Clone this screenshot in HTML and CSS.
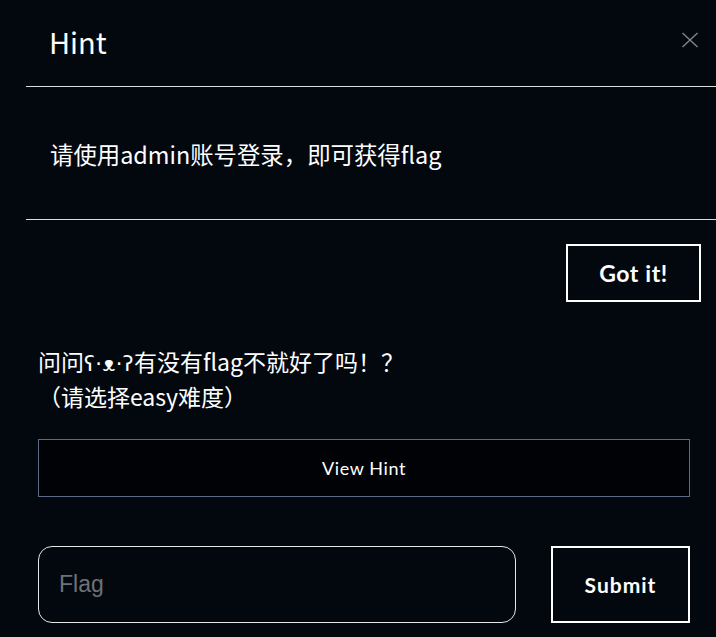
FILE: index.html
```html
<!DOCTYPE html>
<html lang="zh">
<head>
<meta charset="utf-8">
<title>Hint</title>
<link rel="stylesheet" href="styles.css">
</head>
<body>
<div class="modal">
  <div class="modal-header">
    <h5 class="modal-title">Hint</h5>
    <button class="close" aria-label="Close">
      <svg width="18" height="16" viewBox="0 0 18 16"><path d="M1.5 1 L16.5 15 M16.5 1 L1.5 15" stroke="#80858c" stroke-width="1.4" fill="none"/></svg>
    </button>
  </div>
  <div class="modal-body">请使用admin账号登录，即可获得flag</div>
  <div class="modal-footer">
    <button class="btn-outline">Got it!</button>
  </div>
</div>
<div class="challenge">
  <p class="desc">问问<span class="kaomoji">ʕ·ᴥ·ʔ</span>有没有flag不就好了吗！？<br>（请选择easy难度）</p>
  <button class="btn-hint">View Hint</button>
  <div class="submit-row">
    <input class="flag-input" type="text" placeholder="Flag">
    <button class="btn-submit">Submit</button>
  </div>
</div>
</body>
</html>
```

FILE: styles.css
```css
html, body {
  margin: 0;
  padding: 0;
  background: #03080f;
  color: #ffffff;
  font-family: "Lato", "Noto Sans CJK SC", sans-serif;
}

.modal {
  margin-left: 26px;
  width: 690px;
}

.modal-header {
  display: flex;
  align-items: center;
  justify-content: space-between;
  height: 87px;
  padding: 0 17px 0 24px;
  box-sizing: border-box;
  border-bottom: 1px solid #dcdcdc;
}

.modal-title {
  margin: -4px 0 0 -1px;
  font-family: "Noto Sans CJK SC", "Lato", sans-serif;
  font-size: 29px;
  font-weight: 400;
  line-height: 1;
}

.close {
  background: none;
  border: 0;
  padding: 0;
  margin-top: -6px;
  display: flex;
  cursor: pointer;
}

.modal-body {
  padding: 52px 24px 50px 24px;
  font-family: "Noto Sans CJK SC", sans-serif;
  font-size: 23.4px;
  line-height: 30px;
  height: 30px;
  border-bottom: 1px solid #dcdcdc;
  white-space: nowrap;
}

.modal-footer {
  display: flex;
  justify-content: flex-end;
  padding: 24px 15px 24px 24px;
}

.btn-outline {
  width: 135px;
  height: 58px;
  background: transparent;
  color: #fff;
  border: 2px solid #fff;
  font-family: "Lato", sans-serif;
  font-weight: 700;
  font-size: 23px;
  letter-spacing: 0.6px;
  cursor: pointer;
}

.challenge {
  padding: 0 26px 0 38px;
}

.desc {
  margin: 18px 0 25px 0;
  font-family: "Noto Sans CJK SC", sans-serif;
  font-size: 23px;
  line-height: 35px;
  height: 70px;
}

.kaomoji {
  font-family: "DejaVu Sans", sans-serif;
  font-size: 21px;
  line-height: 1;
  letter-spacing: 0.5px;
}

.btn-hint {
  display: block;
  width: 100%;
  height: 58px;
  background: #000206;
  color: #fff;
  border: 1px solid #5d6a85;
  font-family: "Lato", sans-serif;
  font-size: 18px;
  letter-spacing: 0.6px;
  cursor: pointer;
}

.submit-row {
  display: flex;
  gap: 35px;
  margin-top: 49px;
}

.flag-input {
  flex: 1;
  height: 77px;
  box-sizing: border-box;
  background: #03080f;
  border: 1px solid #e6e6e6;
  border-radius: 14px;
  padding: 0 20px;
  color: #fff;
  font-family: "Liberation Sans", sans-serif;
  font-size: 23px;
  outline: none;
}

.flag-input::placeholder {
  color: #6c727a;
}

.btn-submit {
  width: 139px;
  height: 77px;
  background: transparent;
  color: #fff;
  border: 2px solid #fff;
  font-family: "Lato", sans-serif;
  font-weight: 700;
  font-size: 21px;
  letter-spacing: 1px;
  cursor: pointer;
}
```
